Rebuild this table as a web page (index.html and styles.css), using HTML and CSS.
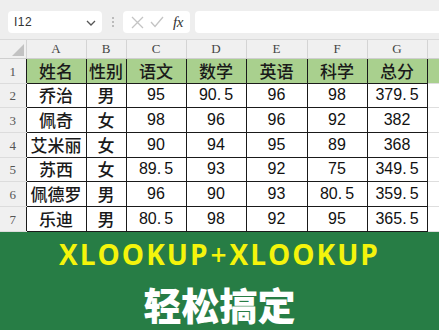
FILE: index.html
```html
<!DOCTYPE html>
<html lang="zh">
<head>
<meta charset="utf-8">
<link rel="stylesheet" href="styles.css">
</head>
<body>
<div class="app">
  <div class="toolbar">
    <div class="namebox">
      <span class="ref">I12</span>
      <svg class="chev" width="10" height="6" viewBox="0 0 10 6"><path d="M1 1 L5 5 L9 1" fill="none" stroke="#555" stroke-width="1.3"/></svg>
    </div>
    <div class="dots"><i></i><i></i><i></i></div>
    <div class="fxbox">
      <svg width="13" height="13" viewBox="0 0 13 13"><path d="M1 1 L12 12 M12 1 L1 12" stroke="#c4c4c4" stroke-width="1.3" fill="none"/></svg>
      <svg width="14" height="12" viewBox="0 0 14 12"><path d="M1 6 L5 10.5 L13 1" stroke="#c4c4c4" stroke-width="1.3" fill="none"/></svg>
      <span class="fx">fx</span>
    </div>
    <div class="input"></div>
  </div>
  <table class="sheet">
    <colgroup>
      <col class="c-rh"><col class="c60"><col class="c40"><col class="c60"><col class="c60"><col class="c61"><col class="c60"><col class="c60"><col class="c-h">
    </colgroup>
    <tr class="colhead">
      <th class="corner"><span class="tri"></span></th>
      <th>A</th><th>B</th><th>C</th><th>D</th><th>E</th><th>F</th><th>G</th><th class="blank"></th>
    </tr>
    <tr class="r25 head">
      <th class="rh">1</th>
      <td class="cn">姓名</td><td class="cn">性别</td><td class="cn">语文</td><td class="cn">数学</td><td class="cn">英语</td><td class="cn">科学</td><td class="cn">总分</td><td class="empty"></td>
    </tr>
    <tr class="r24">
      <th class="rh">2</th>
      <td class="cn">乔治</td><td class="cn">男</td><td>95</td><td>90<span class="dot">.</span>5</td><td>96</td><td>98</td><td>379<span class="dot">.</span>5</td><td class="empty"></td>
    </tr>
    <tr class="r25">
      <th class="rh">3</th>
      <td class="cn">佩奇</td><td class="cn">女</td><td>98</td><td>96</td><td>96</td><td>92</td><td>382</td><td class="empty"></td>
    </tr>
    <tr class="r25">
      <th class="rh">4</th>
      <td class="cn">艾米丽</td><td class="cn">女</td><td>90</td><td>94</td><td>95</td><td>89</td><td>368</td><td class="empty"></td>
    </tr>
    <tr class="r24">
      <th class="rh">5</th>
      <td class="cn">苏西</td><td class="cn">女</td><td>89<span class="dot">.</span>5</td><td>93</td><td>92</td><td>75</td><td>349<span class="dot">.</span>5</td><td class="empty"></td>
    </tr>
    <tr class="r25">
      <th class="rh">6</th>
      <td class="cn">佩德罗</td><td class="cn">男</td><td>96</td><td>90</td><td>93</td><td>80<span class="dot">.</span>5</td><td>359<span class="dot">.</span>5</td><td class="empty"></td>
    </tr>
    <tr class="r25 last">
      <th class="rh">7</th>
      <td class="cn">乐迪</td><td class="cn">男</td><td>80<span class="dot">.</span>5</td><td>98</td><td>92</td><td>95</td><td>365<span class="dot">.</span>5</td><td class="empty"></td>
    </tr>
  </table>
  <div class="banner">
    <div class="title">XLOOKUP<span class="plus">+</span>XLOOKUP</div>
    <div class="sub">轻松搞定</div>
  </div>
</div>
</body>
</html>
```

FILE: styles.css
```css
* { box-sizing: border-box; }
html, body { margin: 0; padding: 0; }
body {
  width: 439px;
  height: 330px;
  overflow: hidden;
  background: #ffffff;
  font-family: "Liberation Sans", Arial, sans-serif;
}
.app {
  width: 439px;
  height: 330px;
  display: flex;
  flex-direction: column;
  overflow: hidden;
}
.toolbar {
  height: 40px;
  flex: none;
  background: #eeeeee;
  display: flex;
  align-items: flex-start;
  padding: 11px 0 0 8px;
  border-bottom: 1px solid #dadada;
}
.namebox {
  width: 94px;
  height: 22px;
  background: #fff;
  border-radius: 4px;
  display: flex;
  align-items: center;
  justify-content: space-between;
  padding: 0 6px 0 6px;
}
.ref { font-size: 12px; color: #333; letter-spacing: 0.5px; }
.chev { margin-top: 1px; }
.dots {
  width: 21px;
  height: 22px;
  display: flex;
  flex-direction: column;
  align-items: center;
  justify-content: center;
  gap: 2px;
}
.dots i { display: block; width: 2px; height: 2px; background: #aaa; border-radius: 1px; }
.fxbox {
  width: 67px;
  height: 22px;
  background: #fff;
  border-radius: 4px;
  display: flex;
  align-items: center;
  padding: 0 4px 0 8px;
  gap: 6px;
}
.fx {
  font-family: "Liberation Serif", serif;
  font-style: italic;
  font-size: 15px;
  color: #333;
  margin-left: 3px;
  letter-spacing: -0.5px;
}
.input {
  flex: 1;
  height: 22px;
  margin-left: 5px;
  background: #fff;
  border-radius: 4px 0 0 4px;
}
.sheet {
  border-collapse: collapse;
  table-layout: fixed;
  width: 439px;
  flex: none;
}
.c-rh { width: 26px; }
.c60 { width: 60px; }
.c61 { width: 61px; }
.c40 { width: 40px; }
.c-h { width: 12px; }
.colhead th {
  height: 18px;
  line-height: 14px;
  background: #f0f0f0;
  border-right: 1px solid #d4d4d4;
  border-bottom: 1px solid #cfcfcf;
  font-family: "Liberation Serif", serif;
  font-weight: normal;
  font-size: 13px;
  color: #444;
  padding: 0;
  vertical-align: middle;
}
.colhead th.blank { border-right: none; }
.corner { position: relative; }
.tri {
  position: absolute;
  right: 2px;
  bottom: 2px;
  width: 0; height: 0;
  border-left: 12px solid transparent;
  border-bottom: 12px solid #c2c2c2;
}
.rh {
  background: #f0f0f0;
  border-bottom: 1px solid #dcdcdc;
  font-family: "Liberation Serif", serif;
  font-weight: normal;
  font-size: 13px;
  line-height: 14px;
  color: #555;
  padding: 2px 0 0 0;
  text-align: center;
  vertical-align: middle;
}
.r25 { height: 25px; }
.r24 { height: 24px; }
td {
  border: 1px solid #1a1a1a;
  text-align: center;
  vertical-align: middle;
  padding: 0;
  font-family: "Liberation Sans", Arial, sans-serif;
  font-size: 16px;
  line-height: 18px;
  color: #111;
  white-space: nowrap;
}
td.cn {
  font-family: "Noto Sans CJK SC", sans-serif;
  font-weight: 500;
  font-size: 17px;
  line-height: 18px;
  color: #1a1a1a;
}
.head td { background: #a9d08e; }
.dot { margin-right: 3px; }
td.empty {
  border: none;
  border-bottom: 1px solid #dedede;
}
.banner {
  flex: 1;
  background: #277d45;
  display: flex;
  flex-direction: column;
  align-items: center;
  padding-top: 7px;
}
.title {
  font-family: "Open Sans", sans-serif;
  font-weight: 700;
  font-size: 28px;
  line-height: 30px;
  color: #f4f40c;
  letter-spacing: 2px;
}
.plus { margin: 0 1px; font-weight: 600; }
.sub {
  font-family: "Noto Sans CJK SC", sans-serif;
  font-weight: 900;
  font-size: 38px;
  line-height: 40px;
  color: #ffffff;
  margin-top: 15px;
}
```
